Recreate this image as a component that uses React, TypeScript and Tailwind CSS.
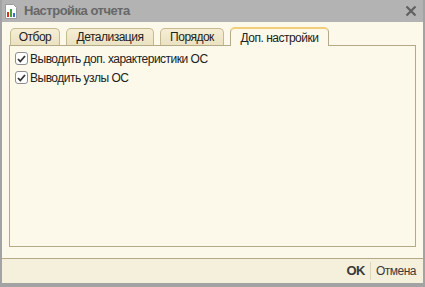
import React from 'react';

const TABS = [
  { label: 'Отбор', w: 'w-[50px]' },
  { label: 'Детализация', w: 'w-[88px]' },
  { label: 'Порядок', w: 'w-[64px]' },
  { label: 'Доп. настройки', w: 'w-[99px]', active: true },
];

const OPTIONS = ['Выводить доп. характеристики ОС', 'Выводить узлы ОС'];

function ReportIcon() {
  return (
    <svg width="14" height="15" viewBox="0 0 14 15">
      <path d="M1.5 0.5h8l3 3v11h-11z" fill="#fff" stroke="#9a9a9a" />
      <rect x="3" y="8" width="2" height="5" fill="#d9302a" />
      <rect x="6" y="5" width="2" height="8" fill="#3aa33a" />
      <rect x="9" y="9" width="2" height="4" fill="#3a6fd0" />
    </svg>
  );
}

function Check() {
  return (
    <span className="w-[13px] h-[13px] rounded-[3px] border border-[#8f8f8f] bg-white flex items-center justify-center shrink-0">
      <svg width="9" height="8" viewBox="0 0 9 8">
        <path d="M1 4l2.3 2.5L8 1" fill="none" stroke="#333" strokeWidth="1.8" />
      </svg>
    </span>
  );
}

export default function App() {
  return (
    <div
      className="w-[425px] h-[287px] flex flex-col bg-[#b3b3b3] border-x-2 border-b-[4px] border-[#a3a3a3] text-[12px] text-[#333] tracking-[-0.5px]"
      style={{ fontFamily: '"Liberation Sans", Arial, sans-serif' }}
    >
      <div className="h-[22px] flex items-center pl-[2px] pr-[6px] shrink-0">
        <ReportIcon />
        <span className="ml-[6px] text-[13px] font-bold text-[#676767]">Настройка отчета</span>
        <div className="flex-1" />
        <svg width="12" height="12" viewBox="0 0 12 12">
          <path d="M1.5 1.5l9 9M10.5 1.5l-9 9" stroke="#606060" strokeWidth="2.2" />
        </svg>
      </div>

      <div className="flex-1 flex flex-col bg-[#fcf9ea]">
        <div className="flex items-end gap-[6px] pl-[8px] pt-[5px] h-[23px] shrink-0">
          {TABS.map((t) =>
            t.active ? (
              <div
                key={t.label}
                className={`${t.w} h-[19px] -mb-px relative z-10 rounded-t-[5px] border border-b-0 border-[#b5aa88] border-t-[2px] border-t-[#f1cf7a] bg-[#fcf9ea] flex items-center justify-center text-[#222]`}
              >
                {t.label}
              </div>
            ) : (
              <div
                key={t.label}
                className={`${t.w} h-[17px] rounded-t-[5px] border border-b-0 border-[#c6b98f] bg-gradient-to-b from-[#f5eed5] to-[#ebe2c2] flex items-center justify-center text-[#222]`}
              >
                {t.label}
              </div>
            )
          )}
        </div>

        <div className="flex-1 mx-[7px] border border-[#b5aa88] bg-[#fcf9ea] pt-[6px] pl-[5px] flex flex-col gap-[6px]">
          {OPTIONS.map((o) => (
            <div key={o} className="flex items-center gap-[2px] h-[13px] text-[#222]">
              <Check />
              <span>{o}</span>
            </div>
          ))}
        </div>

        <div className="mt-[11px] h-[25px] border-t border-[#b5aa88] bg-[#f4f0dc] flex items-center justify-end pr-[7px] shrink-0">
          <span className="font-bold text-[13px] text-[#3a3a3a]">OK</span>
          <span className="mx-[5px] w-px h-[18px] bg-[#ddd6bb]" />
          <span className="text-[#3a3a3a]">Отмена</span>
        </div>
      </div>
    </div>
  );
}
